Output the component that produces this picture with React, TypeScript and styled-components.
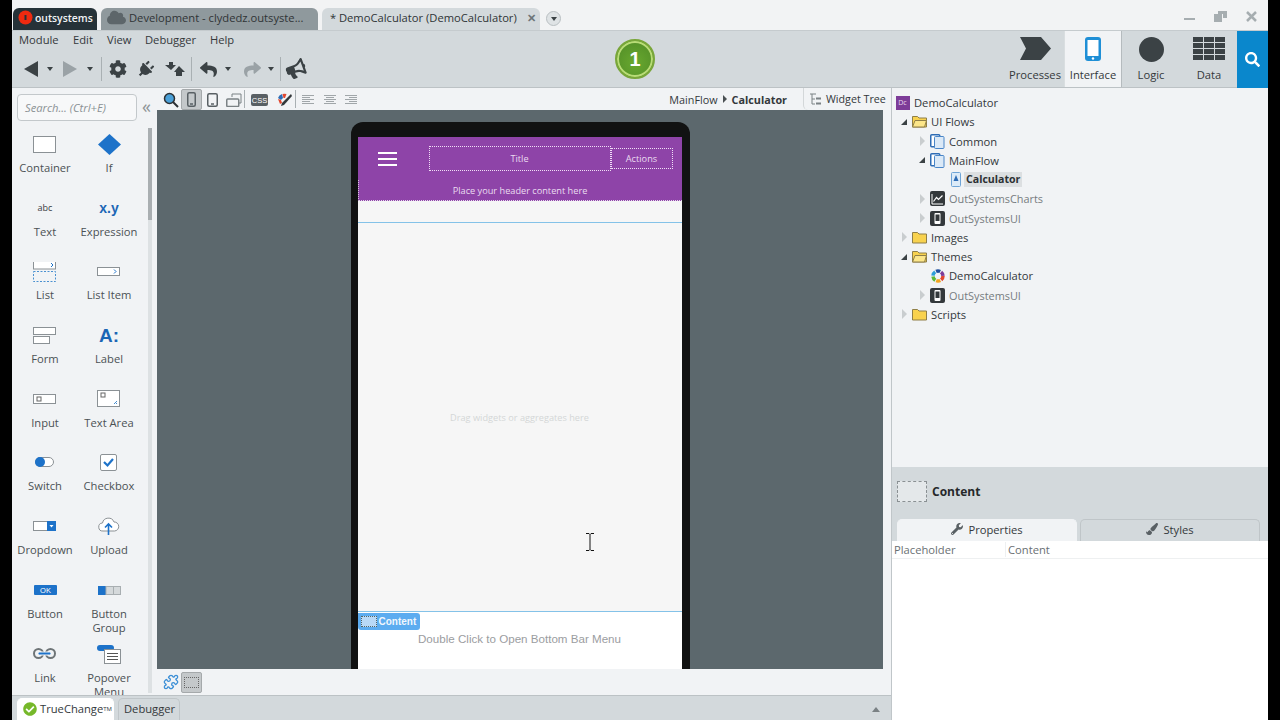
import React from "react";
import styled, { createGlobalStyle } from "styled-components";
import { FaBullhorn, FaCheckCircle, FaCloud, FaCog, FaPaintBrush, FaPlug, FaReply, FaSearch, FaShare, FaWrench } from "react-icons/fa";
import { Puzzle } from "lucide-react";

const Global = createGlobalStyle`
  html, body { margin: 0; padding: 0; background: #000; overflow: hidden; }
  * { box-sizing: border-box; }
  body { font-family: "Open Sans", "Noto Sans", sans-serif; font-size: 11.2px; color: #3a4043; }
`;

const chrome = "#d3d9dc";
const light = "#f1f3f5";
const dark = "#3b4245";

const Frame = styled.div`
  width: 1280px;
  height: 720px;
  padding: 0 12px;
  background: #000;
`;

const Window = styled.div`
  width: 1256px;
  height: 720px;
  display: flex;
  flex-direction: column;
  background: ${light};
  overflow: hidden;
`;

/* top tab strip */
const TabStrip = styled.div`
  height: 30px;
  flex: none;
  display: flex;
  align-items: flex-end;
  padding-left: 1px;
  gap: 4px;
  background: #f2f3f4;
`;

const DocTab = styled.div<{ $w: number; $bg: string; $color: string; $gap?: number }>`
  width: ${(p) => p.$w}px;
  height: 22px;
  display: flex;
  align-items: center;
  gap: ${(p) => p.$gap ?? 5}px;
  padding: 0 0 3px 5px;
  border-radius: 6px 6px 0 0;
  background: ${(p) => p.$bg};
  color: ${(p) => p.$color};
  white-space: nowrap;
  flex: none;
`;

const LogoText = styled.span`
  font-weight: 600;
  font-size: 10.4px;
`;

const CloudMark = styled(FaCloud)`
  margin: 0 -2px 0 1px;
  color: #5d666a;
`;

const TabClose = styled.span`
  margin-left: auto;
  margin-right: 4px;
  font-weight: 700;
  font-size: 11px;
  color: #6d7578;
`;

const TabMenu = styled.div`
  width: 15px;
  height: 15px;
  border-radius: 50%;
  border: 1px solid #b9bfc2;
  background: #dfe3e5;
  display: flex;
  align-items: center;
  justify-content: center;
  margin: 0 0 4px 2px;
  flex: none;
`;

const DownTri = styled.span<{ $c?: string }>`
  width: 0;
  height: 0;
  border-left: 3px solid transparent;
  border-right: 3px solid transparent;
  border-top: 4px solid ${(p) => p.$c || "#3b4245"};
`;

const WinControls = styled.div`
  margin-left: auto;
  align-self: center;
  display: flex;
  align-items: center;
  gap: 19px;
  padding-right: 11px;
  margin-top: 2px;
  color: #a6adb0;
`;

/* main toolbar */
const Toolbar = styled.div`
  height: 58px;
  flex: none;
  display: flex;
  background: ${chrome};
  border-top: 1px solid #c5cbce;
  border-bottom: 1px solid #bcc2c5;
`;

const ToolLeft = styled.div`
  width: 603px;
  flex: none;
  display: flex;
  flex-direction: column;
`;

const MenuBar = styled.div`
  display: flex;
  height: 16px;
  padding-left: 7px;
  align-items: center;
  color: #33383b;
`;

const MenuItem = styled.span<{ $w: number }>`
  width: ${(p) => p.$w}px;
  flex: none;
`;

const ToolRow = styled.div`
  display: flex;
  align-items: center;
  height: 30px;
  margin-top: 7px;
  padding-left: 12px;
`;

const ToolSlot = styled.div<{ $w: number; $faded?: boolean }>`
  width: ${(p) => p.$w}px;
  flex: none;
  display: flex;
  align-items: center;
  justify-content: center;
  color: ${(p) => (p.$faded ? "#9aa2a6" : dark)};
`;

const VSep = styled.div<{ $h?: number }>`
  width: 1px;
  height: ${(p) => p.$h || 24}px;
  background: #a9b0b3;
  flex: none;
`;

const PlugIcon = styled(FaPlug)`
  transform: rotate(45deg);
`;

const HornIcon = styled(FaBullhorn)`
  transform: rotate(-20deg);
`;

const Badge = styled.div`
  width: 40px;
  height: 40px;
  margin-top: 8px;
  flex: none;
  border-radius: 50%;
  background: radial-gradient(circle at 50% 60%, #68a82f, #4f8a26);
  border: 2px solid #79a63a;
  box-shadow: inset 0 0 0 2px #b9dc77;
  color: #fff;
  font-weight: 700;
  font-size: 20px;
  font-family: "Liberation Sans", sans-serif;
  display: flex;
  align-items: center;
  justify-content: center;
`;

const NavGroup = styled.div`
  margin-left: auto;
  display: flex;
`;

const NavTab = styled.div<{ $active?: boolean }>`
  width: 58px;
  height: 100%;
  display: flex;
  flex-direction: column;
  align-items: center;
  color: #33383b;
  background: ${(p) => (p.$active ? light : "transparent")};
  border-left: 1px solid ${(p) => (p.$active ? "#d9dee0" : "transparent")};
  border-right: 1px solid ${(p) => (p.$active ? "#b5bbbe" : "transparent")};
`;

const NavIcon = styled.div`
  height: 31px;
  margin-top: 6px;
  display: flex;
  align-items: flex-start;
  justify-content: center;
`;

const NavLabel = styled.span`
  line-height: 16px;
  margin-top: -1px;
`;

const SearchTab = styled.div`
  width: 31px;
  height: 57px;
  margin-left: -1px;
  position: relative;
  background: #0a87cc;
  color: #fff;
  display: flex;
  align-items: center;
  justify-content: center;
`;

/* work area */
const Work = styled.div`
  flex: 1;
  min-height: 0;
  display: flex;
`;

const WorkLeft = styled.div`
  width: 879px;
  flex: none;
  display: flex;
  flex-direction: column;
`;

const WorkTop = styled.div`
  height: 607px;
  flex: none;
  display: flex;
`;

const Palette = styled.div`
  width: 145px;
  flex: none;
  display: flex;
  flex-direction: column;
  background: ${light};
`;

const PaletteHead = styled.div`
  height: 40px;
  flex: none;
  display: flex;
  align-items: flex-start;
  padding: 6px 0 0 5px;
`;

const SearchBox = styled.div`
  width: 120px;
  height: 27px;
  border: 1px solid #c3c8cb;
  border-radius: 4px;
  background: #f7f8f9;
  display: flex;
  align-items: center;
  padding-left: 7px;
  font-style: italic;
  font-size: 11.2px;
  color: #8b9295;
`;

const Collapse = styled.span`
  margin: 4px 0 0 5px;
  font-size: 18px;
  line-height: 16px;
  color: #8d9497;
`;

const PaletteBody = styled.div`
  flex: 1;
  min-height: 0;
  display: flex;
  overflow: hidden;
`;

const WidgetGrid = styled.div`
  width: 136px;
  flex: none;
  padding-left: 1px;
  display: grid;
  grid-template-columns: 64px 64px;
  grid-auto-rows: 63.7px;
`;

const WidgetCell = styled.div`
  display: flex;
  flex-direction: column;
  align-items: center;
  text-align: center;
  color: #4b5154;
  line-height: 14px;
`;

const WidgetIcon = styled.div`
  height: 33px;
  width: 100%;
  flex: none;
  display: flex;
  align-items: center;
  justify-content: center;
`;

const ExprGlyph = styled.span`
  font-family: "Liberation Sans", sans-serif;
  font-weight: 700;
  color: #1c66b5;
  font-size: 14px;
`;

const AbcGlyph = styled.span`
  font-size: 9px;
  color: #3a4043;
`;

const LabelGlyph = styled.span`
  font-family: "Liberation Sans", sans-serif;
  font-weight: 700;
  color: #1c66b5;
  font-size: 19px;
`;

const ScrollTrack = styled.div`
  width: 4px;
  flex: none;
  height: 565px;
  background: #dde1e3;
`;

const ScrollThumb = styled.div`
  height: 92px;
  background: #a9aeb1;
`;

const Center = styled.div`
  flex: 1;
  min-width: 0;
  display: flex;
  flex-direction: column;
`;

const CanvasBar = styled.div`
  height: 22px;
  flex: none;
  display: flex;
  align-items: flex-end;
  padding-left: 3px;
`;

const BarBtn = styled.div<{ $active?: boolean; $w?: number }>`
  width: ${(p) => p.$w || 21}px;
  height: 21px;
  flex: none;
  display: flex;
  align-items: center;
  justify-content: center;
  border-radius: 2px;
  background: ${(p) => (p.$active ? "#c4c8ca" : "transparent")};
  border: 1px solid ${(p) => (p.$active ? "#a5a9ab" : "transparent")};
  color: #596064;
`;

const BarSep = styled(VSep)`
  align-self: center;
`;

const Crumbs = styled.div`
  margin-left: auto;
  align-self: center;
  display: flex;
  align-items: center;
  gap: 5px;
  color: #33383b;
  font-size: 10.8px;
  padding-right: 16px;
`;

const CrumbArrow = styled.span`
  width: 0;
  height: 0;
  border-top: 4px solid transparent;
  border-bottom: 4px solid transparent;
  border-left: 4px solid #4a5053;
`;

const WidgetTreeTab = styled.div`
  width: 88px;
  height: 22px;
  flex: none;
  display: flex;
  align-items: center;
  gap: 4px;
  padding-left: 5px;
  border-left: 1px solid #d3d7d9;
  border-radius: 0 0 0 5px;
  color: #33383b;
  white-space: nowrap;
  font-size: 10.7px;
`;

const Canvas = styled.div`
  height: 559px;
  flex: none;
  margin-right: 8px;
  background: #5c686d;
  padding-top: 12px;
  display: flex;
  justify-content: center;
  overflow: hidden;
`;

const Phone = styled.div`
  width: 339px;
  height: 570px;
  flex: none;
  padding: 15px 8px 0 7px;
  background: #111212;
  border-radius: 12px 12px 0 0;
`;

const Screen = styled.div`
  position: relative;
  width: 324px;
  height: 555px;
  display: flex;
  flex-direction: column;
  background: #fff;
  color: #fff;
`;

const AppHeader = styled.div`
  height: 64px;
  flex: none;
  background: #8e44a8;
  display: flex;
  flex-direction: column;
`;

const HeaderRow = styled.div`
  height: 43px;
  flex: none;
  display: flex;
  align-items: center;
  padding-left: 20px;
`;

const Burger = styled.div`
  width: 19px;
  height: 14px;
  margin-right: 32px;
  flex: none;
  display: flex;
  flex-direction: column;
  justify-content: space-between;
`;

const BurgerBar = styled.span`
  height: 2px;
  background: #fff;
`;

const HeadSlot = styled.div<{ $w: number; $h: number }>`
  width: ${(p) => p.$w}px;
  height: ${(p) => p.$h}px;
  flex: none;
  border: 1px dotted #f1dff7;
  display: flex;
  align-items: center;
  justify-content: center;
  font-size: 9.2px;
  color: #eadcf0;
`;

const HeaderContent = styled.div`
  flex: 1;
  display: flex;
  align-items: center;
  justify-content: center;
  font-size: 9.2px;
  color: #eadcf0;
  border-left: 1px dotted #d9c2e2;
  border-bottom: 1px dotted #e6d6ec;
`;

const TitleGap = styled.div`
  height: 21px;
  flex: none;
  background: #f6f6f6;
`;

const ContentZone = styled.div`
  height: 390px;
  flex: none;
  display: flex;
  align-items: center;
  justify-content: center;
  background: #f6f6f6;
  border-top: 1px solid #84c2e8;
  border-bottom: 1px solid #84c2e8;
  color: #d4d6d7;
  font-size: 9.2px;
`;

const BottomBar = styled.div`
  flex: 1;
  padding-top: 19px;
  text-align: center;
  font-family: "Liberation Sans", sans-serif;
  font-size: 11.6px;
  line-height: 16px;
  color: #9b9d9f;
`;

const ContentTag = styled.div`
  position: absolute;
  left: 0;
  top: 476px;
  width: 62px;
  height: 17px;
  background: #5cacf0;
  border-radius: 0 3px 3px 3px;
  display: flex;
  align-items: center;
  gap: 2px;
  padding-left: 3px;
  font-family: "Liberation Sans", sans-serif;
  font-weight: 700;
  font-size: 10px;
  color: #f1f7fd;
`;

const TagSwatch = styled.span`
  width: 16px;
  height: 11px;
  background: #b8d9f7;
  border: 1px dotted #566;
`;

const Caret = styled.svg`
  position: absolute;
  left: 228px;
  top: 396px;
`;

const CanvasFoot = styled.div`
  height: 26px;
  flex: none;
  display: flex;
  align-items: center;
  padding-left: 3px;
`;

const DashedSwatch = styled.span`
  width: 15px;
  height: 11px;
  border: 1px dotted #666;
`;

const StatusBar = styled.div`
  flex: 1;
  display: flex;
  align-items: flex-end;
  gap: 4px;
  padding-left: 5px;
  background: ${chrome};
  border-top: 1px solid #bcc2c5;
`;

const StatusTab = styled.div<{ $active?: boolean; $w: number }>`
  width: ${(p) => p.$w}px;
  height: 22px;
  flex: none;
  display: flex;
  align-items: center;
  gap: 3px;
  padding: 0 0 2px 5px;
  border-radius: 5px 5px 0 0;
  background: ${(p) => (p.$active ? "#fff" : chrome)};
  border: 1px solid ${(p) => (p.$active ? "#fff" : "#c0c6c9")};
  border-bottom: none;
  color: #33383b;
`;

const Tm = styled.sup`
  font-size: 6px;
  margin-left: -3px;
  line-height: 0;
`;

const StatusUp = styled.span`
  margin: 0 11px 8px auto;
  width: 0;
  height: 0;
  border-left: 4px solid transparent;
  border-right: 4px solid transparent;
  border-bottom: 5px solid #7a8184;
`;

/* right panel */
const RightPanel = styled.div`
  flex: 1;
  display: flex;
  flex-direction: column;
  border-left: 1px solid #c0c6c9;
  min-width: 0;
`;

const Tree = styled.div`
  height: 379px;
  flex: none;
  padding-top: 5px;
  background: ${light};
`;

const TreeRow = styled.div<{ $indent: number; $muted?: boolean }>`
  height: 19.25px;
  display: flex;
  align-items: center;
  padding-left: ${(p) => p.$indent}px;
  color: ${(p) => (p.$muted ? "#767c7f" : "#33383b")};
  font-size: ${(p) => (p.$muted ? "10.9px" : "11.2px")};
  white-space: nowrap;
`;

const ArrowSlot = styled.span`
  width: 8px;
  margin-right: 4px;
  flex: none;
  display: flex;
  justify-content: center;
`;

const OpenArrow = styled.span`
  width: 0;
  height: 0;
  border-left: 6px solid transparent;
  border-bottom: 6px solid #3b4245;
`;

const ClosedArrow = styled.span`
  width: 0;
  height: 0;
  border-top: 5px solid transparent;
  border-bottom: 5px solid transparent;
  border-left: 5px solid #c9cdcf;
`;

const TreeIcon = styled.span`
  width: 15px;
  height: 15px;
  margin-right: 4px;
  flex: none;
  display: flex;
  align-items: center;
  justify-content: center;
`;

const RootMark = styled.span`
  width: 14px;
  height: 14px;
  flex: none;
  background: #7d3c98;
  color: #e8d8ee;
  font-size: 7px;
  text-align: center;
  line-height: 14px;
`;

const Selected = styled.span`
  margin-left: -3px;
  background: #dcdfe1;
  font-weight: 700;
  font-size: 10.6px;
  padding: 0 2px;
  line-height: 15px;
  color: #2c3134;
`;

const Details = styled.div`
  height: 74px;
  flex: none;
  background: ${chrome};
  padding: 14px 0 0 5px;
  display: flex;
  flex-direction: column;
`;

const DetailsHead = styled.div`
  display: flex;
  align-items: center;
  gap: 5px;
  height: 21px;
  font-weight: 700;
  font-size: 12px;
  color: #26292b;
`;

const DetailsSwatch = styled.span`
  width: 30px;
  height: 21px;
  flex: none;
  border: 1px dashed #8a9093;
  background: #e4e8ea;
`;

const PropTabs = styled.div`
  margin-top: 17px;
  display: flex;
  gap: 3px;
`;

const PropTab = styled.div<{ $active?: boolean }>`
  width: 180px;
  height: 22px;
  display: flex;
  align-items: center;
  justify-content: center;
  gap: 5px;
  padding-bottom: 3px;
  border-radius: 5px 5px 0 0;
  background: ${(p) => (p.$active ? light : chrome)};
  border: 1px solid ${(p) => (p.$active ? light : "#bfc5c8")};
  border-bottom: none;
  color: #33383b;
`;

const PropTable = styled.div`
  flex: 1;
  background: #fff;
`;

const PropRow = styled.div`
  height: 18px;
  display: flex;
  align-items: center;
  color: #6a7073;
  border-bottom: 1px solid #eef0f1;
`;

const PropName = styled.span`
  width: 114px;
  padding-left: 2px;
  border-right: 1px solid #eef0f1;
`;

const PropValue = styled.span`
  padding-left: 2px;
`;

/* drawings */
const Folder = ({ open }: { open?: boolean }) => (
  <svg width="15" height="13" viewBox="0 0 15 13">
    <path d="M.5 12V1.5h5l1.5 1.5h7.500V12z" fill="#f8d24f" stroke="#8f7f48" />
    {open && <path d="M.5 12L3 5.500h11.500L12.500 12z" fill="#fce68a" stroke="#8f7f48" />}
  </svg>
);

const FlowIcon = () => (
  <svg width="15" height="15" viewBox="0 0 15 15">
    <rect x=".75" y=".75" width="9" height="12" rx="1" fill="#fff" stroke="#2e6cb5" strokeWidth="1.500" />
    <rect x="4.500" y="2.500" width="9.500" height="12" rx="1" fill="#dbe9f7" stroke="#4a86c8" />
  </svg>
);

const PageIcon = () => (
  <svg width="10" height="15" viewBox="0 0 10 15">
    <rect x=".5" y=".5" width="9" height="14" rx="1" fill="#dcebf8" stroke="#6ea4d6" />
    <path d="M5 3l2.500 6h-5z" fill="#2e6cb5" />
  </svg>
);

const ChartsIcon = () => (
  <svg width="15" height="15" viewBox="0 0 15 15">
    <rect width="15" height="15" rx="2" fill="#33383b" />
    <path d="M2 3v10h11" stroke="#fff" fill="none" />
    <path d="M3.500 10.500l3-4 2 2 4-4" stroke="#fff" fill="none" strokeWidth="1.200" />
  </svg>
);

const ModuleIcon = () => (
  <svg width="15" height="15" viewBox="0 0 15 15">
    <rect width="15" height="15" rx="2" fill="#33383b" />
    <rect x="4.500" y="2" width="6" height="11" rx="1" fill="#fff" />
    <rect x="5.500" y="3.500" width="4" height="6.500" fill="#33383b" />
  </svg>
);

const wheelColors = ["#e2472f", "#f2a41f", "#5cb83a", "#2e9fd8", "#1c4f9e", "#7d3c98"];

const ThemeWheel = () => (
  <svg width="14" height="14" viewBox="0 0 14 14">
    {wheelColors.map((c, i) => (
      <circle key={c} cx="7" cy="7" r="5" fill="none" stroke={c} strokeWidth="3.500" strokeDasharray="4.300 27.100" strokeDashoffset={-5.236 * i} />
    ))}
  </svg>
);

const box = { fill: "#fff", stroke: "#8b9195" };

const paletteItems: { label: React.ReactNode; icon: React.ReactNode }[] = [
  { label: "Container", icon: <svg width="24" height="18"><rect x=".5" y=".5" width="22" height="16" {...box} /></svg> },
  { label: "If", icon: <svg width="23" height="21"><path d="M11.500 0L23 10.500 11.500 21 0 10.500z" fill="#1d72c9" /></svg> },
  { label: "Text", icon: <AbcGlyph>abc</AbcGlyph> },
  { label: "Expression", icon: <ExprGlyph>x.y</ExprGlyph> },
  {
    label: "List",
    icon: (
      <svg width="24" height="20">
        <rect x=".5" y="-1" width="22" height="8" {...box} />
        <path d="M18 1l2 2-2 2" stroke="#1d72c9" fill="none" />
        <rect x=".5" y="9.500" width="22" height="10" fill="none" stroke="#4a90d0" strokeDasharray="2 1.500" />
      </svg>
    ),
  },
  {
    label: "List Item",
    icon: (
      <svg width="24" height="10">
        <rect x=".5" y=".5" width="22" height="8" {...box} />
        <path d="M17 2.500l2 2-2 2" stroke="#1d72c9" fill="none" />
      </svg>
    ),
  },
  {
    label: "Form",
    icon: (
      <svg width="24" height="18">
        <rect x=".5" y=".5" width="22" height="7" {...box} />
        <rect x=".5" y="9.500" width="16" height="7" {...box} />
      </svg>
    ),
  },
  { label: "Label", icon: <LabelGlyph>A:</LabelGlyph> },
  {
    label: "Input",
    icon: (
      <svg width="24" height="11">
        <rect x=".5" y=".5" width="22" height="9" {...box} />
        <rect x="4" y="3" width="4" height="4" fill="none" stroke="#666" />
      </svg>
    ),
  },
  {
    label: "Text Area",
    icon: (
      <svg width="24" height="18">
        <rect x=".5" y=".5" width="22" height="16" {...box} />
        <rect x="4" y="3" width="4" height="4" fill="none" stroke="#666" />
        <path d="M17 14l3-3M19 14l1-1" stroke="#4a90d0" />
      </svg>
    ),
  },
  {
    label: "Switch",
    icon: (
      <svg width="20" height="11">
        <rect x=".5" y=".5" width="18" height="9" rx="4.500" {...box} />
        <circle cx="5" cy="5" r="5" fill="#1d72c9" />
      </svg>
    ),
  },
  {
    label: "Checkbox",
    icon: (
      <svg width="18" height="18">
        <rect x=".5" y=".5" width="16" height="16" rx="1.500" {...box} />
        <path d="M4 8l3.500 3.500L13 5" stroke="#1d72c9" strokeWidth="2.200" fill="none" />
      </svg>
    ),
  },
  {
    label: "Dropdown",
    icon: (
      <svg width="24" height="11">
        <rect x=".5" y=".5" width="22" height="9" {...box} />
        <rect x="14" y="0" width="9" height="10" fill="#1d72c9" />
        <path d="M16.500 4h4l-2 2.500z" fill="#fff" />
      </svg>
    ),
  },
  {
    label: "Upload",
    icon: (
      <svg width="24" height="19">
        <path d="M6 14a4 4 0 0 1-.5-8 6 6 0 0 1 11.500-1 4.500 4.500 0 0 1 .5 9z" {...box} />
        <path d="M11.500 18V8M8 10.500l3.500-3.500 3.500 3.500" stroke="#1d72c9" strokeWidth="1.600" fill="none" />
      </svg>
    ),
  },
  {
    label: "Button",
    icon: (
      <svg width="23" height="10">
        <rect width="23" height="10" rx="1" fill="#1d72c9" />
        <text x="11.500" y="8" fontSize="7.500" fill="#fff" textAnchor="middle" fontFamily="Liberation Sans">OK</text>
      </svg>
    ),
  },
  {
    label: <>Button<br />Group</>,
    icon: (
      <svg width="23" height="9">
        <rect width="8" height="9" fill="#1d72c9" />
        <rect x="8" y=".5" width="14.500" height="8" fill="#d5d9db" stroke="#a8aeb1" />
        <path d="M15.500 0v9" stroke="#a8aeb1" />
      </svg>
    ),
  },
  {
    label: "Link",
    icon: (
      <svg width="24" height="12">
        <rect x="1" y="1" width="9" height="9" rx="4.500" fill="none" stroke="#6e7477" strokeWidth="2" />
        <rect x="13" y="1" width="9" height="9" rx="4.500" fill="none" stroke="#6e7477" strokeWidth="2" />
        <rect x="5" y="4" width="13" height="3" rx="1.500" fill="#1d72c9" stroke="#f1f3f5" />
      </svg>
    ),
  },
  {
    label: <>Popover<br />Menu</>,
    icon: (
      <svg width="24" height="19">
        <rect x="0" y="0" width="17" height="6" rx="3" fill="#1d72c9" />
        <rect x="7.500" y="4.500" width="16" height="14" {...box} />
        <path d="M10 8.500h11M10 11.500h11M10 14.500h11" stroke="#555" />
      </svg>
    ),
  },
];

const AlignIcon = ({ mode }: { mode: "l" | "c" | "r" }) => {
  const x = (w: number) => (mode === "l" ? 1 : mode === "c" ? (14 - w) / 2 : 13 - w);
  return (
    <svg width="14" height="12" stroke="#a0a6a9">
      {[12, 8, 12, 8, 12].map((w, i) => (
        <path key={i} d={`M${x(w)} ${1.5 + i * 2}h${w}`} />
      ))}
    </svg>
  );
};

const treeRows: { indent: number; arrow?: "open" | "closed"; icon: React.ReactNode; text: React.ReactNode; muted?: boolean }[] = [
  { indent: 3, icon: <RootMark>Dc</RootMark>, text: "DemoCalculator" },
  { indent: 8, arrow: "open", icon: <Folder open />, text: "UI Flows" },
  { indent: 26, arrow: "closed", icon: <FlowIcon />, text: "Common" },
  { indent: 26, arrow: "open", icon: <FlowIcon />, text: "MainFlow" },
  { indent: 44, icon: <PageIcon />, text: <Selected>Calculator</Selected> },
  { indent: 26, arrow: "closed", icon: <ChartsIcon />, text: "OutSystemsCharts", muted: true },
  { indent: 26, arrow: "closed", icon: <ModuleIcon />, text: "OutSystemsUI", muted: true },
  { indent: 8, arrow: "closed", icon: <Folder />, text: "Images" },
  { indent: 8, arrow: "open", icon: <Folder open />, text: "Themes" },
  { indent: 26, icon: <ThemeWheel />, text: "DemoCalculator" },
  { indent: 26, arrow: "closed", icon: <ModuleIcon />, text: "OutSystemsUI", muted: true },
  { indent: 8, arrow: "closed", icon: <Folder />, text: "Scripts" },
];

export default function App() {
  return (
    <Frame>
      <Global />
      <Window>
        <TabStrip>
          <DocTab $w={84} $bg="#263238" $color="#f2f4f5" $gap={2}>
            <svg width="15" height="15" viewBox="0 0 15 15">
              <circle cx="7.500" cy="7.500" r="7" fill="#ee2a10" />
              <rect x="6.500" y="5" width="2" height="5" fill="#263238" />
            </svg>
            <LogoText>outsystems</LogoText>
          </DocTab>
          <DocTab $w={217} $bg="#8f999d" $color="#2f3436">
            <CloudMark size={19} />
            Development - clydedz.outsyste...
          </DocTab>
          <DocTab $w={218} $bg={chrome} $color="#2f3436">
            &nbsp;* DemoCalculator (DemoCalculator)
            <TabClose>✕</TabClose>
          </DocTab>
          <TabMenu><DownTri /></TabMenu>
          <WinControls>
            <svg width="11" height="11"><path d="M0 7h11v2H0z" fill="#a6adb0" /></svg>
            <svg width="13" height="11" fill="#a6adb0"><path d="M0 3h8v8H0zM4 0h9v7H9V3H4z" /></svg>
            <svg width="11" height="11" stroke="#a6adb0" strokeWidth="2.500"><path d="M1 1l9 9M10 1l-9 9" /></svg>
          </WinControls>
        </TabStrip>

        <Toolbar>
          <ToolLeft>
            <MenuBar>
              <MenuItem $w={54}>Module</MenuItem>
              <MenuItem $w={34}>Edit</MenuItem>
              <MenuItem $w={38}>View</MenuItem>
              <MenuItem $w={65}>Debugger</MenuItem>
              <MenuItem $w={30}>Help</MenuItem>
            </MenuBar>
            <ToolRow>
              <ToolSlot $w={14}><svg width="14" height="16"><path d="M14 0v16L0 8z" fill={dark} /></svg></ToolSlot>
              <ToolSlot $w={24}><DownTri /></ToolSlot>
              <ToolSlot $w={16}><svg width="14" height="16"><path d="M0 0v16l14-8z" fill="#9aa2a6" /></svg></ToolSlot>
              <ToolSlot $w={23}><DownTri /></ToolSlot>
              <VSep />
              <ToolSlot $w={31}><FaCog size={18} /></ToolSlot>
              <ToolSlot $w={25}><PlugIcon size={17} /></ToolSlot>
              <ToolSlot $w={33}>
                <svg width="20" height="14" fill={dark}>
                  <path d="M0 3h4V0h4v3h3L6 8zM9 10l5-6 6 6h-3v4h-6v-4z" />
                </svg>
              </ToolSlot>
              <VSep />
              <ToolSlot $w={32}><FaReply size={17} /></ToolSlot>
              <ToolSlot $w={8}><DownTri /></ToolSlot>
              <ToolSlot $w={12} />
              <ToolSlot $w={17} $faded><FaShare size={17} /></ToolSlot>
              <ToolSlot $w={19}><DownTri /></ToolSlot>
              <VSep />
              <ToolSlot $w={30}><HornIcon size={20} /></ToolSlot>
            </ToolRow>
          </ToolLeft>
          <Badge>1</Badge>
          <NavGroup>
            <NavTab>
              <NavIcon><svg width="31" height="23"><path d="M0 0h21l10 11.500L21 23H0l6-11.500z" fill={dark} /></svg></NavIcon>
              <NavLabel>Processes</NavLabel>
            </NavTab>
            <NavTab $active>
              <NavIcon>
                <svg width="16" height="24">
                  <rect width="16" height="24" rx="3" fill="#1f8fd6" />
                  <rect x="2.500" y="3" width="11" height="16" fill="#fff" />
                  <circle cx="8" cy="21.500" r="1.200" fill="#fff" />
                </svg>
              </NavIcon>
              <NavLabel>Interface</NavLabel>
            </NavTab>
            <NavTab>
              <NavIcon><svg width="25" height="25"><circle cx="12.500" cy="12.500" r="12.500" fill={dark} /></svg></NavIcon>
              <NavLabel>Logic</NavLabel>
            </NavTab>
            <NavTab>
              <NavIcon>
                <svg width="32" height="23" fill={dark}>
                  {[0, 6, 12, 18].flatMap((y) =>
                    [0, 11, 22].map((x) => <rect key={`${x}-${y}`} x={x} y={y} width="10" height="5" />)
                  )}
                </svg>
              </NavIcon>
              <NavLabel>Data</NavLabel>
            </NavTab>
            <SearchTab><FaSearch size={15} /></SearchTab>
          </NavGroup>
        </Toolbar>

        <Work>
          <WorkLeft>
            <WorkTop>
              <Palette>
                <PaletteHead>
                  <SearchBox>Search... (Ctrl+E)</SearchBox>
                  <Collapse>«</Collapse>
                </PaletteHead>
                <PaletteBody>
                  <WidgetGrid>
                    {paletteItems.map((item, i) => (
                      <WidgetCell key={i}>
                        <WidgetIcon>{item.icon}</WidgetIcon>
                        {item.label}
                      </WidgetCell>
                    ))}
                  </WidgetGrid>
                  <ScrollTrack><ScrollThumb /></ScrollTrack>
                </PaletteBody>
              </Palette>

              <Center>
                <CanvasBar>
                  <BarBtn>
                    <svg width="16" height="16">
                      <circle cx="6.500" cy="6.500" r="5" fill="#4aa0d8" stroke="#2c3134" strokeWidth="1.500" />
                      <path d="M10 10l5 5" stroke="#2c3134" strokeWidth="2" />
                    </svg>
                  </BarBtn>
                  <BarBtn $active>
                    <svg width="9" height="15"><rect x=".75" y=".75" width="7.500" height="13.500" rx="1.500" fill="none" stroke="#596064" strokeWidth="1.500" /><path d="M3 12h3" stroke="#596064" strokeWidth="1.500" /></svg>
                  </BarBtn>
                  <BarBtn>
                    <svg width="11" height="14"><rect x=".75" y=".75" width="9.500" height="12.500" rx="1.500" fill="none" stroke="#596064" strokeWidth="1.500" /><path d="M4 11h3" stroke="#596064" strokeWidth="1.500" /></svg>
                  </BarBtn>
                  <BarBtn>
                    <svg width="16" height="14" fill="none" stroke="#7b8285">
                      <path d="M6 4V1h9v9h-3" />
                      <rect x=".75" y="6" width="12" height="7.500" rx="1" strokeWidth="1.500" />
                    </svg>
                  </BarBtn>
                  <BarSep $h={18} />
                  <BarBtn $w={29}>
                    <svg width="17" height="12">
                      <rect width="17" height="12" rx="2" fill="#596064" />
                      <text x="8.500" y="9" fontSize="7.500" fill="#fff" textAnchor="middle" fontFamily="Liberation Sans">CSS</text>
                    </svg>
                  </BarBtn>
                  <BarBtn>
                    <svg width="15" height="14">
                      <path d="M1 5a6 6 0 0 1 4-4l1 4-2 2z" fill="#2e6cb5" />
                      <path d="M5.500 1a6 6 0 0 1 4 0L8 5H6.500z" fill="#e2472f" />
                      <path d="M1 6l3 1 1 3-2 1z" fill="#e2472f" />
                      <path d="M14 1L5 10l-1 3 3-1 8-9z" fill="#33383b" />
                    </svg>
                  </BarBtn>
                  <BarSep $h={18} />
                  <BarBtn $w={23}><AlignIcon mode="l" /></BarBtn>
                  <BarBtn><AlignIcon mode="c" /></BarBtn>
                  <BarBtn><AlignIcon mode="r" /></BarBtn>
                  <Crumbs>
                    MainFlow <CrumbArrow /> <strong>Calculator</strong>
                  </Crumbs>
                  <WidgetTreeTab>
                    <svg width="13" height="13" stroke="#7b8285" fill="none">
                      <path d="M1 1h6M3 1v10M3 6h3M3 11h3" />
                      <path d="M7 5.500h5M7 10.500h5" strokeWidth="2" />
                    </svg>
                    Widget Tree
                  </WidgetTreeTab>
                </CanvasBar>

                <Canvas>
                  <Phone>
                    <Screen>
                      <AppHeader>
                        <HeaderRow>
                          <Burger><BurgerBar /><BurgerBar /><BurgerBar /></Burger>
                          <HeadSlot $w={182} $h={25}>Title</HeadSlot>
                          <HeadSlot $w={62} $h={21}>Actions</HeadSlot>
                        </HeaderRow>
                        <HeaderContent>Place your header content here</HeaderContent>
                      </AppHeader>
                      <TitleGap />
                      <ContentZone>Drag widgets or aggregates here</ContentZone>
                      <BottomBar>Double Click to Open Bottom Bar Menu</BottomBar>
                      <ContentTag><TagSwatch />Content</ContentTag>
                      <Caret width="8" height="18" stroke="#111" fill="none">
                        <path d="M0 .5h3l1 1 1-1h3M4 1.500v15M0 17.500h3l1-1 1 1h3" />
                      </Caret>
                    </Screen>
                  </Phone>
                </Canvas>

                <CanvasFoot>
                  <BarBtn><Puzzle size={16} color="#3c8fd6" /></BarBtn>
                  <BarBtn $active><DashedSwatch /></BarBtn>
                </CanvasFoot>
              </Center>
            </WorkTop>

            <StatusBar>
              <StatusTab $active $w={97}>
                <FaCheckCircle size={14} color="#76b82a" />
                TrueChange<Tm>TM</Tm>
              </StatusTab>
              <StatusTab $w={62}>Debugger</StatusTab>
              <StatusUp />
            </StatusBar>
          </WorkLeft>

          <RightPanel>
            <Tree>
              {treeRows.map((row, i) => (
                <TreeRow key={i} $indent={row.indent} $muted={row.muted}>
                  {row.indent > 3 && (
                    <ArrowSlot>
                      {row.arrow === "open" && <OpenArrow />}
                      {row.arrow === "closed" && <ClosedArrow />}
                    </ArrowSlot>
                  )}
                  <TreeIcon>{row.icon}</TreeIcon>
                  {row.text}
                </TreeRow>
              ))}
            </Tree>
            <Details>
              <DetailsHead><DetailsSwatch />Content</DetailsHead>
              <PropTabs>
                <PropTab $active><FaWrench size={12} color="#596064" />Properties</PropTab>
                <PropTab><FaPaintBrush size={12} color="#596064" />Styles</PropTab>
              </PropTabs>
            </Details>
            <PropTable>
              <PropRow>
                <PropName>Placeholder</PropName>
                <PropValue>Content</PropValue>
              </PropRow>
            </PropTable>
          </RightPanel>
        </Work>
      </Window>
    </Frame>
  );
}
